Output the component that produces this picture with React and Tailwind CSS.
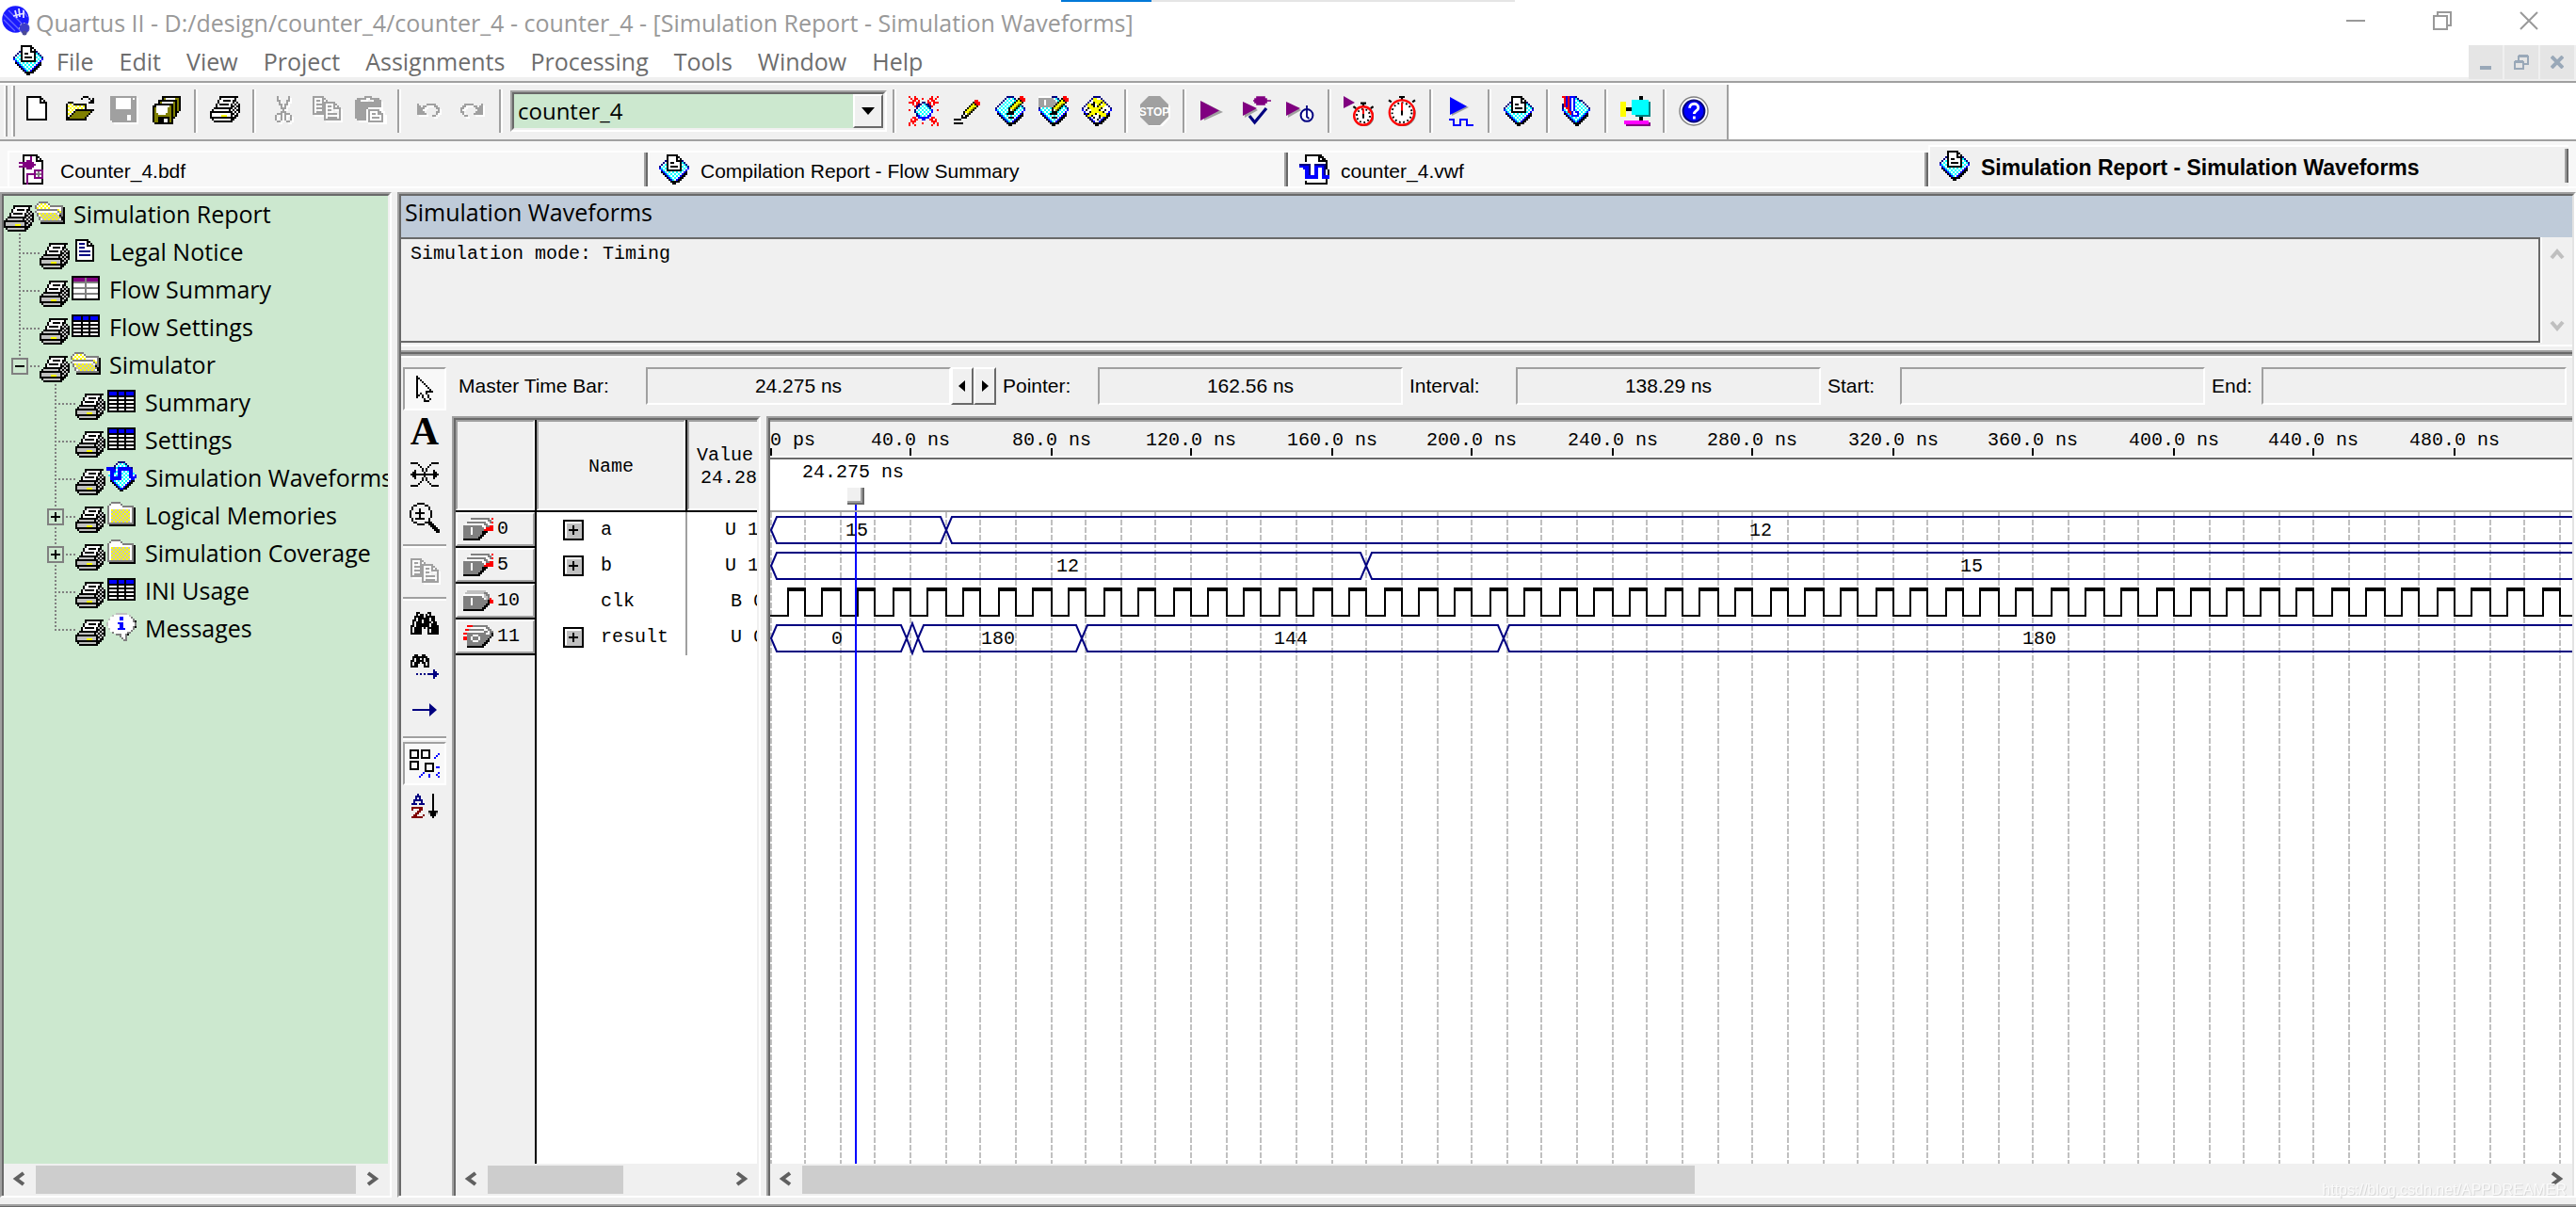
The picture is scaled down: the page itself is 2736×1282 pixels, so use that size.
/**
 * Quartus II: Simulation Report window
 *
 * - Title bar, menu bar, toolbar and document tabs on top
 * - Report tree on the left
 * - Waveform viewer on the right (tools, time bars, signal table, waves)
 *
 * Small icons are kept as text bitmaps, one letter per pixel.
 */

const PALETTE = {
  K: '#000000',
  W: '#ffffff',
  G: '#c0c0c0',
  D: '#808080',
  L: '#a0a0a0',
  Y: '#ffff00',
  O: '#808000',
  N: '#000080',
  B: '#0000ff',
  C: '#00ffff',
  R: '#ff0000',
  P: '#800080',
  M: '#ff00ff',
  T: '#008080',
  V: '#800000',
};

/* dithered fills: [even, odd] */
const DITHER = {
  c: ['#00ffff', '#ffffff'],
  y: ['#ffff00', '#ffffff'],
  g: ['#ffff00', '#c0c0c0'],
};

/* ── Bitmaps ── */
const PRINTER = [
  '.....KKKKKKKKKK.',
  '.....KWWWWWWWK..',
  '....KWWKKKKWKK..',
  '....KWWWWWWWKGK.',
  '...KWKKKKKWKGKGK',
  '...KWWWWWWWKKGKK',
  '..KKKKKKKKKKGKGK',
  '.KGGGGGGGGKGKGKK',
  'KKKKKKKKKKKKGKGK',
  'KGGGGGGGGGGKKGK.',
  'KGGGGGYYYGGKGKK.',
  'KKKKKKKKKKKKKK..',
  '.KGGGGGGGGGKK...',
  '..KKKKKKKKKK....',
];
const PRINTER_LIGHT = PRINTER.map((row) => row.replace(/G/g, 'W'));

const FOLDER_OPEN = [
  '..DDDDD.........',
  '.DWyyyWD........',
  'DWyyyyyWDDDDDDD.',
  'DyyyyyyyWWWWWWDK',
  '.DDDDDDDDDDDyyDK',
  'DWWWWWWWWWWWDyDK',
  '.DggggggggggWDDK',
  '.DWggggggggggKDK',
  '..DggggggggggDKK',
  '..DWgggggggggWKK',
  '...DDDDDDDDDDDDK',
  '...KKKKKKKKKKKKK',
];
const FOLDER = [
  '..DDDDD........',
  '.DWWWWWD.......',
  'DWWWWWWWDDDDDD.',
  'DWWWWWWWWWWWWDK',
  'DWggggggggggWDK',
  'DWggggggggggWDK',
  'DWggggggggggWDK',
  'DWggggggggggWDK',
  'DWggggggggggWDK',
  'DWggggggggggWDK',
  'DWggggggggggWDK',
  'DDDDDDDDDDDDDDK',
  '.KKKKKKKKKKKKKK',
];
const NOTICE = [
  'KKKKKKK....',
  'KWWWWWKK...',
  'KWNNNWKWK..',
  'KWWWWWKKKK.',
  'KWNNNWWWWK.',
  'KWWWWWWWWK.',
  'KWNNNNNNWK.',
  'KWWWWWWWWK.',
  'KWNNNNNNWK.',
  'KWWWWWWWWK.',
  'KWWWWWWWWK.',
  'KKKKKKKKKK.',
];
const TABLE_PURPLE = [
  'KKKKKKKKKKKKKKK',
  'KPPPPPPDPPPPPPK',
  'KPPPPPPDPPPPPPK',
  'KDDDDDDDDDDDDDK',
  'KWWWWWWDWWWWWWK',
  'KWWWWWWDWWWWWWK',
  'KDDDDDDDDDDDDDK',
  'KWWWWWWDWWWWWWK',
  'KWWWWWWDWWWWWWK',
  'KDDDDDDDDDDDDDK',
  'KWWWWWWDWWWWWWK',
  'KWWWWWWDWWWWWWK',
  'KKKKKKKKKKKKKKK',
];
const TABLE_BLUE = [
  'KKKKKKKKKKKKKKK',
  'KBBBBKBBBKBBBBK',
  'KBBBBKBBBKBBBBK',
  'KKKKKKKKKKKKKKK',
  'KWWWWKWWWKWWWWK',
  'KKKKKKKKKKKKKKK',
  'KWWWWKWWWKWWWWK',
  'KKKKKKKKKKKKKKK',
  'KWWWWKWWWKWWWWK',
  'KKKKKKKKKKKKKKK',
  'KWWWWKWWWKWWWWK',
  'KKKKKKKKKKKKKKK',
];
const WAVE_CHIP = [
  '......NNNN......',
  '.....NccccN.....',
  '....NccccccN....',
  'BBBBNcBBBBBBBN..',
  'BBBBBcBBBBBBBB..',
  '..BBBcBBccccBB..',
  '.cBBccBBccccBBc.',
  '.cBBccBBccccBBcB',
  '..BBBBBBccccBBBB',
  '..BBBBBBcccccBB.',
  '..KBccccccccBKK.',
  '...KBccccccBKK..',
  '....KBccccBKK...',
  '.....KBccBKK....',
  '......KBBKK.....',
  '.......KK.......',
];
const MESSAGE = [
  '.....GGGGGG.....',
  '...GWWWWWWWWG...',
  '..WWWWWBBWWWWD..',
  '.GWWWWWBBWWWWWD.',
  '.WWWWWWWWWWWWWDK',
  'GWWWWWBBBWWWWWWD',
  'GWWWWWWBBWWWWWWD',
  '.WWWWWWBBWWWWWDK',
  '.GWWWWBBBBWWWWD.',
  '..WWWWWWWWWWWD..',
  '...DWWWWWWWDD...',
  '.....DDDWWDK....',
  '.......DWWD.....',
  '........DWD.....',
  '.........DD.....',
];
const REPORT = [
  '....KKKKKK......',
  '....KWWWWKK.....',
  '....KWWWWKWK....',
  '...NKWWWWKKKN...',
  '..NcKWKKWWWKcN..',
  '.NccKWWWWWWKccN.',
  'NcccKWKKKKWKcccN',
  'BcccKWWWWWWKcccB',
  '.BccKKKKKKKKccB.',
  '.KBccccccccccBK.',
  '..KBccccccccBKK.',
  '...KBccccccBKK..',
  '....KBccccBKK...',
  '.....KBccBKK....',
  '......KKKKK.....',
  '.......KK.......',
];
const DIAMOND = [
  '......NNNN......',
  '.....NccccN.....',
  '....NccccccN....',
  '...NccccccccN...',
  '..NccccccccccN..',
  '.NccccccccccccN.',
  'NccccccccccccccN',
  'BccccccccccccccB',
  '.BccccccccccccB.',
  '.KBccccccccccBK.',
  '..KBccccccccBKK.',
  '...KBccccccBKK..',
  '....KBccccBKK...',
  '.....KBccBKK....',
  '......KKKKK.....',
  '.......KK.......',
];
const PEN_OVERLAY = [
  '.............RR.',
  '............KRRR',
  '...........KYKRR',
  '..........KYYYK.',
  '.........KYYOK..',
  '........KYYOK...',
  '.......KYYOK....',
  '.......KWOK.....',
  '.......KKK......',
  '......KKKK......',
  '................',
  '.......KKK......',
];
const TAG_OVERLAY = [
  'WWWWWWW.........',
  'LLLLLLLL........',
  'LLLWLLLLL.......',
  'LLLWLLLLLL......',
  'LLLWLLLLL.......',
  'LLLLLLLL........',
];
const CROSS_CHIP = [
  '......NNNN......',
  '.....NYYWWN.....',
  '....NWYYYYYN....',
  '...NWWKYYYKYN...',
  '..NYYKKWYKWYYN..',
  '.NWYYYKWKYYYWWN.',
  'NWWKYYYYYYKWWWWN',
  'BWKWWYYYYKWWKWWB',
  '.BWWKYYYYYYKWWB.',
  '.KBKYYYKWYYYYBK.',
  '..KYYKWWWKYYYKK.',
  '...KBWKWWKWBKK..',
  '....KBWWKWBKK...',
  '.....KBWWBKK....',
  '......KKKKK.....',
  '.......KK.......',
];
const CHIP_LINES = [
  'RRBRBBBN........',
  '.RBRBWBcN.......',
  '.RBRBWBccNN.....',
  '.RBRBWBccccN....',
  'NRBRBWBcccccN...',
  'NRBRBWBccccccN..',
  'NcRRBWBcccccccN.',
  'BccRBWBcccccccB.',
  '.BcRRBWBBccccB..',
  '.KBcRBWWBcccBK..',
  '..KBcBBBBccBKK..',
  '...KBcccccBKK...',
  '....KBcccBKK....',
  '.....KBcBKK.....',
  '......KKKK......',
  '.......KK.......',
];
const BURST = [
  'R..R........R..R',
  '.R.RR..R...RR.R.',
  '..RR.R....R.RR..',
  'RRRWRR.NN.RRWRRR',
  '..R.RNNccNNR.R..',
  '...RNNccccNNR...',
  '....NccccccN....',
  'R..NccccccccB..R',
  '...NccccccccB...',
  '....NccccccB....',
  '....NBccccBB....',
  '..RR.BBBBBB.RR..',
  '.RWRR..BB..RRWR.',
  '.RRR........RRR.',
  'R.R....R.....R.R',
  'R..R........R..R',
];
const PENCIL = [
  '..............',
  '..............',
  '...........RR.',
  '..........KRRR',
  '.........KYKRR',
  '........KYYYK.',
  '.......KYYOK..',
  '......KYYOK...',
  '.....KYYOK....',
  '.....KWOK.....',
  '....KWKK......',
  '....KKK.......',
  'KKKK..........',
  '..............',
  'KKKKK.........',
];
const NEW_DOC = [
  'KKKKKKKK...',
  'KWWWWWWKK..',
  'KWWWWWWKWK.',
  'KWWWWWWKKKK',
  'KWWWWWWWWWK',
  'KWWWWWWWWWK',
  'KWWWWWWWWWK',
  'KWWWWWWWWWK',
  'KWWWWWWWWWK',
  'KWWWWWWWWWK',
  'KWWWWWWWWWK',
  'KWWWWWWWWWK',
  'KKKKKKKKKKK',
];
const OPEN_DOC = [
  '.........KKK...',
  '........K...K.K',
  '.............KK',
  '.KKK........KKK',
  'KyyyKKKKKKK....',
  'KyyyyyyyyyK....',
  'KyyyyyyyyyK....',
  'KyyyyKKKKKKKKKK',
  'KyyyKOOOOOOOOK.',
  'KyyKOOOOOOOOK..',
  'KyKOOOOOOOOK...',
  'KKOOOOOOOOK....',
  'KKKKKKKKKKK....',
];
const SAVE = [
  'LLLLLLLLLLLLLL',
  'LLLWWWWWWWWLWL',
  'LLLWWWWWWWWLLL',
  'LLLWWWWWWWWLLL',
  'LLLWWWWWWWWLLL',
  'LLLWWWWWWWWLLL',
  'LLLWWWWWWWWLLL',
  'LLLLLLLLLLLLLL',
  'LLLLLLLLLLLLLL',
  'LLLLLLLLLLLLLL',
  'LLLLLLLLLWWLLL',
  'LLLLLLLLLWWLLL',
  'LLLLLLLLLWWLLL',
  '.LLLLLLLLLLLLL',
];
const SAVE_ALL = [
  '.....KKKKKKKKKK',
  '.....KOWWWWWOOK',
  '...KKKKKKKKKKOK',
  '...KOWWWWWWOKOK',
  '.KKKKKKKKKKOKOK',
  'KKWWWWWWWOKOKOK',
  'KOWWWWWWOOKOKOK',
  'KOWWWWWWOOKOKOK',
  'KOWWWWWWOOKOKK.',
  'KOOWWWWOOOKOK..',
  'KOOOOOOOOOKOK..',
  'KOOKKKKKKOKK...',
  'KOOKKKWWKOK....',
  'KOOKKKWWKOK....',
  '.KKKKKKKKKK....',
];
const CUT = [
  '.L.....L.',
  '.L.....L.',
  '.LL...LL.',
  '..L...L..',
  '..LL.LL..',
  '...L.L...',
  '...LLL...',
  '....L....',
  '...LLL...',
  '.LLL.LLL.',
  'L..L.L..L',
  'L..L.L..L',
  'L..L.L..L',
  '.LL...LL.',
];
const COPY = [
  'LLLLLL.........',
  'L....LL........',
  'L.LL.L.L.......',
  'L....LLLLLLL...',
  'L.LLLLL....LL..',
  'L....LL.LL.L.L.',
  'L.LLLLL....LLLL',
  'L....LL.LL....L',
  'L.LLLLL.......L',
  'LLLLLLL.LLLLL.L',
  '......L.......L',
  '......L.LLLLL.L',
  '......LLLLLLLLL',
];
const PASTE = [
  '.....LLLL.......',
  '.LLLLL..LLLLL...',
  'LLL.......LLLL..',
  'LLLLLLLLLLLLLL..',
  'LLLLLLLLLLLLLL..',
  'LLLLLLLLLLLLLL..',
  'LLLLLLLWWWWWWW..',
  'LLLLLLWLLLLLLWW.',
  'LLLLLLWLWWWWLLW.',
  'LLLLLLWLWLLWLLLW',
  'LLLLLLWLWWWWWWLW',
  'LLLLLLWLWLLLLWLW',
  '.LLLLLWLWWWWWWLW',
  '......WLLLLLLLLW',
];
const UNDO = [
  '............',
  '............',
  '............',
  '............',
  'L....LLLLL..',
  'LL.LL....LL.',
  'LLLL......LL',
  'LLL........L',
  'LLLL......LL',
  'LLLLL.....L.',
  '........LL..',
];
const REDO = UNDO.map((row) => row.split('').reverse().join(''));

const BDF_FILE = [
  '..KKKKKKKK....',
  '..KWWWPWWKK...',
  '..KWWWPWWKWK..',
  '..KWPPPWWKKKK.',
  'PPPPPPPPWWWWK.',
  '..PPPPPPPWWWK.',
  'PPPPPPPPWWWWK.',
  '..KWPPPWWWWWK.',
  '..KWWWWWPPPPP.',
  '..KWWWWWPWDWP.',
  '..KWPPPPPDDDP.',
  '..KWPWWWPWDWP.',
  '..KWPWWWPPPPP.',
  '..KWPWWWWWWWK.',
  '..KWPWWWWWWWK.',
  '..KKPKKKKKKKK.',
];
const VWF_FILE = [
  '...KKKKKKKKK....',
  '...KWWWWWWKKK...',
  '...KWWWWWWKWKK..',
  '...KWWWWWWKKKKK.',
  '....WWWWWWWWWWK.',
  'NNNNNNWWNNNNNNK.',
  'BBBBBNWWBBBBBNK.',
  '..BBBNWWBBWWBNK.',
  '...BBNWWBBWWBNWK',
  '...BBNWWBBWWBNWK',
  '...BBNWWBBWWBNWK',
  '...BBBBBBBWWBBBB',
  '...BBBBBBBWWBBBB',
  '....WWWWWWWWWWK.',
  '...KWWWWWWWWWWK.',
  '...KKKKKKKKKKKK.',
];
const PIN_BUS = [
  '....DDDDDDDDDD.R',
  '...WWWWWWWWWWDD.',
  '..DDDDDDDDDDWWDR',
  '.WWWWWWWWWWDDWW.',
  'DDDDDDDDDDWWDDRR',
  'DDDDWDDDDDDWRRRR',
  'DDDDWDDDDDDRRRRR',
  'DDDDWDDDDDKKK...',
  'DDDDWDDDDDKK....',
  'DDDDDDDDDKK.....',
  'DDDDDDDDKK......',
  'KKKKKKKKK.......',
];
const PIN_SINGLE = [
  '..GGGGGGGGGG....',
  '.GGGGGGGGGGDD...',
  'WWWWWWWWWWWGDD..',
  'DDDDDDDDDDWGGD..',
  'DDDDWDDDDDDWGDR.',
  'DDDDWDDDDDDDDKRR',
  'DDDDWDDDDDDDDKRR',
  'DDDDWDDDDDDDKK..',
  'DDDDDDDDDDDKK...',
  'DDDDDDDDDDKK....',
  'KKKKKKKKKKK.....',
];
const PIN_OUT = [
  '..RRRDDDDDDDD...',
  '....WWWWWWWWDD..',
  '.RRDDDDDDDDWWDD.',
  '...WWWWWWWWDDWDD',
  'RRDDDDDDDDDDWWDK',
  '..DDDWWWDDDDDDDK',
  'RRDDWDDDWDDDDDK.',
  'RRDDWDDDWDDDDK..',
  '..DDDWWWDDDDKK..',
  '..DDDDDDDDDKK...',
  '..DDDDDDDDKK....',
  '..KKKKKKKKK.....',
];
const BINOCULARS = [
  '...KK....KK....',
  '...K.KK.K.K....',
  '..KKKKK.KKKKK..',
  '..K.KKKKKK.KK..',
  '.KK.KK.KKK.KK..',
  '.K.KKKWKKKK.KK.',
  '.K.KKKKKKK.KKK.',
  'KK.KKKKKKK.KKKK',
  'K.KKKK.K.KKKKKK',
  'K.KKKK...K.KKKK',
  'K.KKKK...K.KKKK',
  'KKKKKK...KKKKKK',
];
const FIND_NEXT = [
  '..KK..KK.......',
  '.KKKKKKKK......',
  '.K.KK.K.KK.....',
  'KK.KKKK.KK.....',
  'K.KKK.KK.K.....',
  'K.KK...K.K.....',
  'KKKK...KKK.....',
  '...............',
  '............N..',
  '............NN.',
  '...N.N.N.NNNNNN',
  '............NN.',
  '............N..',
];
const TRANSITION = [
  'KKKK.......KKKK',
  '....K.....K....',
  '.....K...K.....',
  '......K.K......',
  '..K...K.K...K..',
  '.KK....K....KK.',
  'KKKKKKKKKKKKKKK',
  '.KK....K....KK.',
  '..K...K.K...K..',
  '......K.K......',
  '.....K...K.....',
  '....K.....K....',
  'KKKK.......KKKK',
];
const MAGNIFIER = [
  '....KKKK........',
  '..KK....KK......',
  '.K........K.....',
  '.K...K....K.....',
  'K....K.....K....',
  'K..KKKKK...K....',
  'K....K.....K....',
  'K....K.....K....',
  '.K.KKKKK..K.....',
  '.K........K.....',
  '..KK....KKKK....',
  '....KKKK..KKK...',
  '...........KKK..',
  '............KKK.',
  '.............KKK',
  '..............KK',
];
const SORT = [
  '...N.......K..',
  '..NNN......K..',
  '..N.N......K..',
  '.NNNNN.....K..',
  '.N...N.....K..',
  'NNN.NNN....K..',
  '...........K..',
  'VVVVVV.....K..',
  'V...VV.....K..',
  '...VV....KKKKK',
  '..VV.....LKKKL',
  '.VV...V...KKK.',
  'VVVVVV.....K..',
];
const SNAP = [
  'KKKKK.KKKKK.....',
  'K...K.K...K.....',
  'K...K.K...K....B',
  'K...K.K...K...B.',
  'KKKKK.KKKKK..B..',
  '................',
  'KKKKK...........',
  'K...K...KKKKK...',
  'K...K...K...K...',
  'K...K...K...K.BB',
  'KKKKK...K...K...',
  '........KKKKK...',
  '.......B.......B',
  '......B...B...B.',
  '.....B....B....B',
];
const CURSOR = [
  'K........',
  'KK.......',
  'KWK......',
  'KWWK.....',
  'KWWWK....',
  'KWWWWK...',
  'KWWWWWK..',
  'KWWWWWWK.',
  'KWWWWKKKK',
  'KWKWWK...',
  'KK.KWWK..',
  'K..KWWK..',
  '....KWWK.',
  '....KKK..',
];

/* Draws one or more stacked bitmaps at two screen pixels per dot */
function Pixels({ layers, className = '' }) {
  const cols = layers[0][0].length;
  const rows = layers[0].length;
  const rects = [];

  layers.forEach((art, l) => {
    art.forEach((row, y) => {
      let x = 0;
      while (x < row.length) {
        const ch = row[x];
        let run = 1;
        if (DITHER[ch]) {
          rects.push(<rect key={`${l}-${y}-${x}`} x={x} y={y} width="1" height="1" fill={DITHER[ch][(x + y) % 2]} />);
        } else if (PALETTE[ch]) {
          while (row[x + run] === ch) run += 1;
          rects.push(<rect key={`${l}-${y}-${x}`} x={x} y={y} width={run} height="1" fill={PALETTE[ch]} />);
        }
        x += run;
      }
    });
  });

  return (
    <svg
      width={cols * 2}
      height={rows * 2}
      viewBox={`0 0 ${cols} ${rows}`}
      shapeRendering="crispEdges"
      className={`block shrink-0 ${className}`}
      aria-hidden="true"
    >
      {rects}
    </svg>
  );
}

/* 16x16 vector icon, same cell as the bitmaps */
function Icon16({ children }) {
  return (
    <svg viewBox="0 0 16 16" className="block h-8 w-8 shrink-0" aria-hidden="true">
      {children}
    </svg>
  );
}

function Stopwatch({ cx, cy, r }) {
  return (
    <g>
      <path d={`M${cx - 1.5} ${cy - r - 1.4}h3M${cx} ${cy - r - 1.4}v2M${cx - r} ${cy - r + 0.4}l1.4 1M${cx + r} ${cy - r + 0.4}l-1.4 1`} stroke="#000" strokeWidth="1.1" />
      <circle cx={cx + 0.4} cy={cy + 0.4} r={r} fill="#808080" />
      <circle cx={cx} cy={cy} r={r - 0.4} fill="#fff" stroke="#f00" strokeWidth="1.2" />
      <circle cx={cx} cy={cy} r={r - 1.8} fill="none" stroke="#000" strokeWidth="1" strokeDasharray="0.9 1.3" />
      <path d={`M${cx} ${cy + 1}V${cy - r + 1.6}`} stroke="#f00" strokeWidth="1" />
      <path d={`M${cx} ${cy - 1}v2.4`} stroke="#000" strokeWidth="1" />
    </g>
  );
}

const bitmap = (...layers) => <Pixels layers={layers} />;
const disabled = (art) => <Pixels layers={[art]} className="drop-shadow-[2px_2px_0_#fff]" />;

const FILE_TOOLS = [
  [
    ['New', bitmap(NEW_DOC)],
    ['Open', bitmap(OPEN_DOC)],
    ['Save', disabled(SAVE)],
    ['Save All', bitmap(SAVE_ALL)],
  ],
  [['Print', bitmap(PRINTER_LIGHT)]],
  [
    ['Cut', disabled(CUT)],
    ['Copy', disabled(COPY)],
    ['Paste', disabled(PASTE)],
  ],
  [
    ['Undo', disabled(UNDO)],
    ['Redo', disabled(REDO)],
  ],
];

const RUN_TOOLS = [
  [
    ['Settings', bitmap(BURST)],
    ['Assignment Editor', bitmap(PENCIL)],
    ['Assign Pins', bitmap(DIAMOND, PEN_OVERLAY)],
    ['Pin Planner', bitmap(DIAMOND, TAG_OVERLAY, PEN_OVERLAY)],
    ['Floorplan', bitmap(CROSS_CHIP)],
  ],
  [
    [
      'Stop',
      <Icon16 key="stop">
        <path d="M5.5 1h6L16 5.500v6L11.500 16.500h-6L1 12z" fill="#fff" />
        <path d="M4.500 0h6L15 4.500v6.500L10.500 15.500h-6L0 11V4.500z" fill="#a0a0a0" />
        <text x="7.500" y="10.300" textAnchor="middle" fill="#fff" className="font-['Liberation_Sans'] text-[6px] font-bold">
          STOP
        </text>
      </Icon16>,
    ],
  ],
  [
    [
      'Start Compilation',
      <Icon16 key="play">
        <path d="M2 3l11 5.500L3 13z" fill="#a0a0a0" />
        <path d="M1 2.500v10.500L11 7.700z" fill="#800080" />
      </Icon16>,
    ],
    [
      'Analysis & Synthesis',
      <Icon16 key="check">
        <path d="M1.500 3.500v8l7-4z" fill="#a0a0a0" />
        <path d="M0.500 3v7.500L8 6.500z" fill="#800080" />
        <path d="M6 2.500h9.500M8 0.500h4v4h-4zM7 1.500h6v2H7z" fill="#800080" stroke="#800080" strokeWidth="0.800" />
        <path d="M4 10.500l2.800 3.500L13 6.500" fill="none" stroke="#000080" strokeWidth="1.600" />
      </Icon16>,
    ],
    [
      'Timing Analyzer',
      <Icon16 key="timing">
        <path d="M1.500 3.500v8l7-4z" fill="#a0a0a0" />
        <path d="M0.500 3v7.500L8 6.500z" fill="#800080" />
        <circle cx="11.500" cy="10.200" r="3.200" fill="#fff" stroke="#000080" strokeWidth="1" />
        <path d="M11.500 5v6l1.200 1" fill="none" stroke="#000080" strokeWidth="0.900" />
      </Icon16>,
    ],
  ],
  [
    [
      'Start Timing Simulation',
      <Icon16 key="startwatch">
        <path d="M0 0v6.500L6 3.500z" fill="#800080" />
        <Stopwatch cx={10.5} cy={10.5} r={5.3} />
      </Icon16>,
    ],
    [
      'Timing Closure',
      <Icon16 key="watch">
        <Stopwatch cx={8} cy={8.8} r={7} />
      </Icon16>,
    ],
  ],
  [
    [
      'Start Simulation',
      <Icon16 key="sim">
        <path d="M3.500 1.500v9l9-4.500z" fill="#a0a0a0" />
        <path d="M2.500 0.500v9.500L11.500 5.500z" fill="#00f" />
        <path d="M2 12.500h2.500v3H8v-3h3.500v3H15" fill="none" stroke="#00f" strokeWidth="1" shapeRendering="crispEdges" />
      </Icon16>,
    ],
  ],
  [['Compilation Report', bitmap(REPORT)]],
  [['Chip Editor', bitmap(CHIP_LINES)]],
  [
    [
      'Programmer',
      <Icon16 key="prog">
        <g shapeRendering="crispEdges">
          <path d="M0 3h3v8H0z" fill="#ff0" />
          <path d="M3 6h3v2H3zM10 0h2v14h-2z" fill="#000" />
          <path d="M7 3h9v8H8z" fill="#008080" />
          <path d="M6 2h9v8H6z" fill="#0ff" />
          <path d="M3 14h13v2H3z" fill="#800080" />
          <path d="M2 13h13v2H2z" fill="#f0f" />
        </g>
      </Icon16>,
    ],
  ],
  [
    [
      'Help',
      <Icon16 key="help">
        <circle cx="8" cy="8" r="7.500" fill="#fff" stroke="#808080" strokeWidth="0.700" />
        <circle cx="8" cy="8" r="5.700" fill="#00f" stroke="#000080" strokeWidth="1" />
        <path d="M5.800 6.400c0-3 4.600-3 4.600-.2 0 1.700-2.200 1.600-2.200 3.300M8.200 10.800v1.500" fill="none" stroke="#fff" strokeWidth="1.400" />
      </Icon16>,
    ],
  ],
];

const MENUS = ['File', 'Edit', 'View', 'Project', 'Assignments', 'Processing', 'Tools', 'Window', 'Help'];

const TABS = [
  { label: 'Counter_4.bdf', art: BDF_FILE },
  { label: 'Compilation Report - Flow Summary', art: REPORT },
  { label: 'counter_4.vwf', art: VWF_FILE },
  { label: 'Simulation Report - Simulation Waveforms', art: REPORT, active: true },
];

const TREE = [
  { label: 'Simulation Report', level: 0, art: FOLDER_OPEN },
  { label: 'Legal Notice', level: 1, art: NOTICE },
  { label: 'Flow Summary', level: 1, art: TABLE_PURPLE },
  { label: 'Flow Settings', level: 1, art: TABLE_BLUE },
  { label: 'Simulator', level: 1, art: FOLDER_OPEN, box: 'minus', last: true },
  { label: 'Summary', level: 2, art: TABLE_BLUE },
  { label: 'Settings', level: 2, art: TABLE_BLUE },
  { label: 'Simulation Waveforms', level: 2, art: WAVE_CHIP },
  { label: 'Logical Memories', level: 2, art: FOLDER, box: 'plus' },
  { label: 'Simulation Coverage', level: 2, art: FOLDER, box: 'plus' },
  { label: 'INI Usage', level: 2, art: TABLE_BLUE },
  { label: 'Messages', level: 2, art: MESSAGE, last: true },
];

const SIGNALS = [
  { id: '0', name: 'a', value: 'U 15', art: PIN_BUS, bus: true },
  { id: '5', name: 'b', value: 'U 12', art: PIN_BUS, bus: true },
  { id: '10', name: 'clk', value: 'B 0', art: PIN_SINGLE },
  { id: '11', name: 'result', value: 'U 0', art: PIN_OUT, bus: true },
];

/* ── Toolbar ── */
function ToolGroup({ tools }) {
  return (
    <div className="flex">
      {tools.map(([label, icon]) => (
        <button key={label} type="button" aria-label={label} className="flex h-8 w-[46px] items-start justify-center">
          {icon}
        </button>
      ))}
    </div>
  );
}

function ToolSeparator() {
  return <div className="mx-[6px] h-[46px] w-1 shrink-0 border-l-2 border-r-2 border-l-[#a0a0a0] border-r-white" />;
}

function Toolbar() {
  return (
    <div className="flex border-t-2 border-t-white bg-white">
      <div className="flex h-[58px] items-center border-r-2 border-[#a0a0a0] bg-[#f0f0f0] pb-[2px] pl-1 pr-3">
        <div className="h-[54px] w-1 border-l-2 border-r-2 border-l-white border-r-[#a0a0a0]" />
        <div className="ml-1 h-[54px] w-1 border-l-2 border-r-2 border-l-white border-r-[#a0a0a0]" />
        {FILE_TOOLS.map((tools, i) => (
          <div key={i} className="flex items-center">
            <ToolGroup tools={tools} />
            <ToolSeparator />
          </div>
        ))}
        <div className="relative ml-[2px] h-11 w-[400px] border-2 border-b-white border-l-[#a0a0a0] border-r-white border-t-[#a0a0a0]">
          <select
            aria-label="Current project"
            className="h-full w-full appearance-none rounded-none border-2 border-b-[#f0f0f0] border-l-[#696969] border-r-[#f0f0f0] border-t-[#696969] bg-[#cce8cf] pl-1 font-['Open_Sans',sans-serif] text-[24px] leading-8 text-black"
          >
            <option>counter_4</option>
          </select>
          <span className="pointer-events-none absolute inset-y-[2px] right-[2px] flex w-8 items-center justify-center border-2 border-b-[#696969] border-l-white border-r-[#696969] border-t-white bg-[#f0f0f0]">
            <svg viewBox="0 0 14 8" className="h-2 w-[14px]" aria-hidden="true">
              <path d="M0 0h14L7 8z" />
            </svg>
          </span>
        </div>
        <ToolSeparator />
        {RUN_TOOLS.map((tools, i) => (
          <div key={i} className="flex items-center">
            {i > 0 && <ToolSeparator />}
            <ToolGroup tools={tools} />
          </div>
        ))}
      </div>
    </div>
  );
}

/* ── Title and menu ── */
function TitleBar() {
  return (
    <header className="bg-white">
      <div className="flex h-[2px]">
        <div className="w-[1127px]" />
        <div className="w-24 bg-[#0078d7]" />
        <div className="w-[386px] bg-[#e5e5e5]" />
      </div>
      <div className="flex h-[46px] items-start pt-1 text-[#999999]">
        <svg viewBox="0 0 32 32" className="ml-[2px] h-8 w-8" aria-hidden="true">
          <circle cx="14.500" cy="14.500" r="14.200" fill="#1a1aff" />
          <path d="M2 9l18 18M2 15l12 12M7 5l20 20M22 4l5 8" stroke="#8a8aff" strokeWidth="1.200" opacity="0.7" />
          <path d="M14 5l2 8M18 3l1 9M23 5v8M12 11l12-3" stroke="#e6e6ff" strokeWidth="1.800" />
          <circle cx="24" cy="24" r="5.500" fill="#3c3cc8" stroke="#c8c8dc" strokeWidth="1" strokeDasharray="2 2" />
          <circle cx="24" cy="29" r="2.500" fill="#4a4a96" />
        </svg>
        <h1 className="ml-1 flex-1 whitespace-nowrap font-['Open_Sans',sans-serif] text-[25px] leading-9">
          Quartus II - D:/design/counter_4/counter_4 - counter_4 - [Simulation Report - Simulation Waveforms]
        </h1>
        <div className="flex pr-1">
          <button type="button" aria-label="Minimize" className="flex h-8 w-[92px] items-center justify-center">
            <span className="h-[2px] w-5 bg-[#999999]" />
          </button>
          <button type="button" aria-label="Restore" className="flex h-8 w-[92px] items-center justify-center">
            <svg viewBox="0 0 20 20" className="h-5 w-5" fill="none" stroke="#999999" strokeWidth="2" aria-hidden="true">
              <path d="M1 5h14v14H1zM5 5V1h14v14h-4" />
            </svg>
          </button>
          <button type="button" aria-label="Close" className="flex h-8 w-[92px] items-center justify-center">
            <svg viewBox="0 0 20 20" className="h-5 w-5" fill="none" stroke="#999999" strokeWidth="2" aria-hidden="true">
              <path d="M1 1l18 18M19 1L1 19" />
            </svg>
          </button>
        </div>
      </div>
    </header>
  );
}

function MenuBar() {
  return (
    <nav className="flex h-10 items-start border-b-2 border-[#a0a0a0] bg-white">
      <div className="flex h-[38px] flex-1 items-start border-b-4 border-[#f0f0f0]">
        <div className="ml-[14px] mr-[14px]">
          <Pixels layers={[REPORT]} />
        </div>
        <div className="flex gap-[27px]">
          {MENUS.map((m) => (
            <button key={m} type="button" className="font-['Open_Sans',sans-serif] text-[25px] leading-[34px] text-[#6d6d6d]">
              {m}
            </button>
          ))}
        </div>
      </div>
      <div className="flex h-[38px] gap-[2px] bg-[#f0f0f0] pb-[2px] pr-[2px]">
        <button type="button" aria-label="Minimize document" className="flex h-9 w-9 items-end justify-center bg-[#e5e5e5] pb-[10px]">
          <span className="h-1 w-3 bg-[#99a8b8]" />
        </button>
        <button type="button" aria-label="Restore document" className="flex h-9 w-9 items-center justify-center bg-[#e5e5e5]">
          <svg viewBox="0 0 16 16" className="h-4 w-4" fill="none" stroke="#99a8b8" strokeWidth="2" aria-hidden="true">
            <path d="M1 8h9v7H1zM5 6V2h10v8h-4M1 7h9M5 1h10" />
          </svg>
        </button>
        <button type="button" aria-label="Close document" className="flex h-9 w-9 items-center justify-center bg-[#e5e5e5]">
          <svg viewBox="0 0 14 14" className="h-[14px] w-[14px]" stroke="#99a8b8" strokeWidth="4" aria-hidden="true">
            <path d="M1 1l12 12M13 1L1 13" />
          </svg>
        </button>
      </div>
    </nav>
  );
}

function TabStrip() {
  return (
    <div className="border-t-2 border-[#a0a0a0] bg-[#f7f7f7] pb-1">
      <div className="flex h-[50px] items-end border-b-2 border-white pl-2 pr-2">
        {TABS.map((tab) => (
          <button
            key={tab.label}
            type="button"
            className={[
              'flex flex-1 items-center border-l-2 border-t-2 border-l-white border-t-white pl-[10px] text-black',
              'font-["Liberation_Sans",sans-serif] leading-7',
              tab.active ? 'h-11 bg-[#f0f0f0] pb-[2px] text-[23px] font-bold' : 'h-[38px] bg-[#f7f7f7] text-[21px]',
            ].join(' ')}
          >
            <span className="w-8">
              <Pixels layers={[tab.art]} />
            </span>
            <span className="flex-1 whitespace-nowrap pl-3 pt-[3px] text-left">{tab.label}</span>
            <span className="h-9 w-1 border-l-2 border-r-2 border-l-[#a0a0a0] border-r-[#696969]" />
          </button>
        ))}
      </div>
    </div>
  );
}

/* ── Scroll bars ── */
function Chevron({ dir }) {
  const paths = {
    left: 'M12 2L4 8l8 6',
    right: 'M4 2l8 6-8 6',
    up: 'M2 12l6-7 6 7',
    down: 'M2 4l6 7 6-7',
  };
  const dim = dir === 'up' || dir === 'down';
  return (
    <svg viewBox="0 0 16 16" className="h-4 w-4" fill="none" stroke={dim ? '#bfbfbf' : '#606060'} strokeWidth="4" aria-hidden="true">
      <path d={paths[dir]} />
    </svg>
  );
}

function HScroll({ thumb }) {
  return (
    <div className="flex h-[34px] shrink-0 bg-[#f0f0f0] pb-[2px]">
      <button type="button" aria-label="Scroll left" className="flex w-[34px] items-center justify-center">
        <Chevron dir="left" />
      </button>
      <div className="flex-1 pt-[2px]">
        <div className={`h-[30px] bg-[#cdcdcd] ${thumb}`} />
      </div>
      <button type="button" aria-label="Scroll right" className="flex w-[34px] items-center justify-center">
        <Chevron dir="right" />
      </button>
    </div>
  );
}

/* ── Report tree ── */
function Branch({ box, last }) {
  return (
    <svg viewBox="0 0 38 40" className="block h-10 w-[38px] shrink-0" shapeRendering="crispEdges" fill="none" aria-hidden="true">
      <g stroke="#808080" strokeWidth="2" strokeDasharray="2 2">
        <path d={last ? 'M17 0v22' : 'M17 0v40'} />
        <path d="M20 21h18" />
      </g>
      {box && (
        <g>
          <path d="M9 13h16v16H9z" fill="#cce8cf" stroke="#808080" strokeWidth="2" />
          <path d={box === 'plus' ? 'M12 21h10M17 16v10' : 'M12 21h10'} stroke="#000" strokeWidth="2" />
        </g>
      )}
    </svg>
  );
}

function ReportTree() {
  return (
    <aside className="flex w-[416px] shrink-0 flex-col border-2 border-b-white border-l-[#a0a0a0] border-r-white border-t-[#a0a0a0]">
      <div className="flex flex-1 flex-col border-l-2 border-r-2 border-t-2 border-l-[#696969] border-r-[#f0f0f0] border-t-[#696969]">
        <ul className="flex-1 overflow-hidden bg-[#cce8cf]">
          {TREE.map((node) => (
            <li key={node.label}>
              <button type="button" className="flex h-10 w-full items-start">
                {node.level === 2 && <span className="w-[38px] shrink-0" />}
                {node.level > 0 && <Branch box={node.box} last={node.last} />}
                <Pixels layers={[PRINTER]} className="mt-[10px]" />
                <span className="flex h-9 w-[34px] shrink-0 items-center justify-center">
                  <Pixels layers={[node.art]} />
                </span>
                <span className="whitespace-nowrap pl-2 font-['Open_Sans',sans-serif] text-[25px] leading-[38px] text-black">{node.label}</span>
              </button>
            </li>
          ))}
        </ul>
        <HScroll thumb="w-full" />
      </div>
    </aside>
  );
}

/* ── Waveform viewer ── */
const VIEW_TOOLS = [
  { label: 'Selection', art: CURSOR, pressed: true },
  { label: 'Text' },
  { label: 'Waveform Editing', art: TRANSITION },
  { label: 'Zoom', art: MAGNIFIER },
  null,
  { label: 'Copy Cells', art: COPY, off: true },
  null,
  { label: 'Find', art: BINOCULARS },
  { label: 'Find Next', art: FIND_NEXT },
  { label: 'Go To', arrow: true },
  null,
  { label: 'Snap to Grid', art: SNAP, pressed: true },
  { label: 'Sort', art: SORT },
];

function ViewTools() {
  return (
    <div className="flex w-[54px] shrink-0 flex-col pl-[2px] pt-[10px]">
      {VIEW_TOOLS.map((tool, i) =>
        tool ? (
          <button
            key={tool.label}
            type="button"
            aria-label={tool.label}
            className={[
              'flex h-[46px] w-[46px] items-center justify-center',
              tool.pressed ? 'border-2 border-b-white border-l-[#a0a0a0] border-r-white border-t-[#a0a0a0] bg-[#f8f8f8]' : 'pb-[2px]',
            ].join(' ')}
          >
            {tool.art && <Pixels layers={[tool.art]} className={tool.off ? 'drop-shadow-[2px_2px_0_#fff]' : ''} />}
            {tool.arrow && (
              <svg viewBox="0 0 26 14" className="h-[14px] w-[26px]" aria-hidden="true">
                <path d="M0 6h18V0l8 7-8 7V8H0z" fill="#000080" />
              </svg>
            )}
            {tool.label === 'Text' && <span className="font-['Liberation_Serif',serif] text-[42px] font-bold leading-10 text-black">A</span>}
          </button>
        ) : (
          <div key={i} className="h-[10px] w-[46px] pt-1">
            <div className="h-1 border-b-2 border-t-2 border-b-white border-t-[#a0a0a0]" />
          </div>
        ),
      )}
    </div>
  );
}

function TimeField({ id, label, labelWidth, value, spinner = false }) {
  return (
    <>
      <label htmlFor={id} className={`shrink-0 whitespace-nowrap pl-[7px] ${labelWidth}`}>
        {label}
      </label>
      <input
        id={id}
        readOnly
        defaultValue={value}
        className="h-10 min-w-0 flex-1 border-2 border-b-white border-l-[#a0a0a0] border-r-white border-t-[#a0a0a0] bg-[#f0f0f0] text-center"
      />
      {spinner && (
        <div className="flex">
          {['M10 0v12L3 6z', 'M4 0v12l7-6z'].map((d, i) => (
            <button
              key={d}
              type="button"
              aria-label={i ? 'Next transition' : 'Previous transition'}
              className="flex h-10 w-6 items-center justify-center border-2 border-b-[#696969] border-l-white border-r-[#696969] border-t-white"
            >
              <svg viewBox="0 0 14 12" className="h-3 w-[14px]" aria-hidden="true">
                <path d={d} />
              </svg>
            </button>
          ))}
        </div>
      )}
    </>
  );
}

function TimeBars() {
  return (
    <div className="flex h-[62px] items-start pr-[6px] pt-[10px] font-['Liberation_Sans',sans-serif] text-[21px] leading-10 text-black">
      <TimeField id="master" label="Master Time Bar:" labelWidth="w-[206px]" value="24.275 ns" spinner />
      <TimeField id="pointer" label="Pointer:" labelWidth="w-[108px]" value="162.56 ns" />
      <TimeField id="interval" label="Interval:" labelWidth="w-[120px]" value="138.29 ns" />
      <TimeField id="start" label="Start:" labelWidth="w-[84px]" value="" />
      <TimeField id="end" label="End:" labelWidth="w-[60px]" value="" />
    </div>
  );
}

function SignalTable() {
  const head = 'h-[98px] border-b-2 border-black p-0 font-normal';
  const face = 'flex h-full flex-col justify-center border-2 border-b-white border-l-[#a0a0a0] border-r-white border-t-[#a0a0a0] bg-[#f0f0f0] pt-1';
  return (
    <div className="flex w-[328px] shrink-0 flex-col border-2 border-b-0 border-l-[#a0a0a0] border-r-white border-t-[#a0a0a0]">
      <div className="flex flex-1 flex-col border-l-2 border-r-2 border-t-2 border-l-[#696969] border-r-[#f0f0f0] border-t-[#696969]">
        <div className="flex flex-1 flex-col overflow-hidden bg-white font-['Liberation_Mono',monospace] text-[20px] leading-6 text-black">
          <table className="w-[374px] table-fixed border-separate border-spacing-0">
            <colgroup>
              <col className="w-[86px]" />
              <col className="w-[160px]" />
              <col className="w-[128px]" />
            </colgroup>
            <thead>
              <tr>
                <th className={`${head} border-r-2`} aria-label="Index">
                  <div className={face} />
                </th>
                <th className={`${head} border-r-2`}>
                  <div className={`${face} items-center`}>Name</div>
                </th>
                <th className={head}>
                  <div className={`${face} items-start pl-2`}>
                    <span>Value</span>
                    <span className="pl-1">24.28</span>
                  </div>
                </th>
              </tr>
            </thead>
            <tbody>
              {SIGNALS.map((s) => (
                <tr key={s.id}>
                  <td className="h-[38px] border-b-2 border-r-2 border-black p-0">
                    <div className="flex h-9 items-center gap-1 border-2 border-b-[#a0a0a0] border-l-white border-r-[#a0a0a0] border-t-white bg-[#f0f0f0] pl-[6px]">
                      <Pixels layers={[s.art]} />
                      {s.id}
                    </div>
                  </td>
                  <td className="border-r-2 border-[#a0a0a0] p-0">
                    <div className="flex items-center">
                      <span className="flex w-[68px] justify-end pr-[18px]">
                        {s.bus && (
                          <svg viewBox="0 0 22 22" className="block h-[22px] w-[22px] shrink-0" shapeRendering="crispEdges" aria-hidden="true">
                            <path d="M1 1h20v20H1z" fill="#c0c0c0" stroke="#000" strokeWidth="2" />
                            <path d="M3 19V3h16" fill="none" stroke="#fff" strokeWidth="2" />
                            <path d="M6 11h10M11 6v10" stroke="#000" strokeWidth="2" />
                          </svg>
                        )}
                      </span>
                      {s.name}
                    </div>
                  </td>
                  <td className="p-0 text-center">{s.value}</td>
                </tr>
              ))}
            </tbody>
          </table>
          <div className="w-[86px] flex-1 border-r-2 border-black bg-[#f0f0f0]" />
        </div>
        <HScroll thumb="w-[144px]" />
      </div>
    </div>
  );
}

/* time (ns) to x, snapped to the two pixel raster; values are line centres */
const NS = 3.727;
const toX = (t) => Math.floor((t * NS) / 2) * 2 + 1;
const range = (n) => Array.from({ length: n }, (_, i) => i);

const LANES = [
  { top: 5, changes: [50], labels: [[92, '15'], [1052, '12']] },
  { top: 43, changes: [170], labels: [[316, '12'], [1276, '15']] },
  { top: 120, changes: [39, 42, 89, 209], labels: [[71, '0'], [242, '180'], [553, '144'], [1348, '180']] },
];

function busPath(changes, top) {
  const bottom = top + 28;
  const mid = top + 14;
  const far = 2200;
  let d = '';
  let left = 1;
  [...changes.map(toX), null].forEach((x) => {
    const right = x ?? far;
    if (right - left < 16) {
      /* too short for a flat top, the slopes meet */
      const peak = (left + right) / 2;
      d += `M${left} ${mid}L${peak} ${top - 2}L${right} ${mid}L${peak} ${bottom + 2}Z`;
    } else {
      d += `M${left} ${mid}L${left + 6} ${top}H${right - 6}L${right} ${mid}L${right - 6} ${bottom}H${left + 6}Z`;
    }
    left = right;
  });
  return d;
}

function clockPath() {
  let low = 'M0 110';
  let high = '';
  range(53).forEach((i) => {
    const up = toX(i * 10 + 5);
    const down = toX(i * 10 + 10);
    low += `H${up}V82H${down}V110`;
    high += `M${up - 1} 82H${down + 1}`;
  });
  return [low, high];
}

function Waves() {
  const [clock, highs] = clockPath();
  return (
    <div className="flex min-w-0 flex-1 flex-col border-l-2 border-t-2 border-[#a0a0a0]">
      <div className="flex flex-1 flex-col border-l-2 border-t-2 border-[#696969] bg-white">
        <svg className="block h-[96px] w-full font-['Liberation_Mono',monospace] text-[20px]" shapeRendering="crispEdges">
          <rect width="100%" height="40" fill="#f0f0f0" />
          <rect width="100%" height="2" fill="#a0a0a0" />
          <rect y="38" width="100%" height="2" fill="#ffffff" />
          <rect y="40" width="100%" height="2" fill="#696969" />
          <text x="0" y="27">0 ps</text>
          {range(12).map((i) => (
            <text key={i} x={toX((i + 1) * 40)} y="27" textAnchor="middle">
              {(i + 1) * 40}.0 ns
            </text>
          ))}
          {range(13).map((i) => (
            <rect key={i} x={toX(i * 40) - 1} y="30" width="2" height="8" />
          ))}
          <text x="34" y="61">24.275 ns</text>
          <path d="M82 72h18v18H82z" fill="#696969" />
          <path d="M82 72h16v16H82z" fill="#a0a0a0" />
          <path d="M82 72h14v14H82z" fill="#f0f0f0" />
          <rect x="90" y="90" width="2" height="6" fill="#0000ff" />
        </svg>
        <div className="flex flex-1 flex-col border-t-2 border-[#a0a0a0]">
          <svg className="block h-0 min-h-[300px] w-full flex-1 font-['Liberation_Mono',monospace] text-[20px]">
            {range(53).map((i) => (
              <line key={i} x1={toX(i * 10)} x2={toX(i * 10)} y1="0" y2="100%" stroke="#c0c0c0" strokeWidth="2" strokeDasharray="6 2" />
            ))}
            {LANES.map((lane) => (
              <g key={lane.top}>
                <path d={busPath(lane.changes, lane.top)} fill="none" stroke="#000080" strokeWidth="2" />
                {lane.labels.map(([x, text]) => (
                  <text key={x} x={x} y={lane.top + 20} textAnchor="middle">
                    {text}
                  </text>
                ))}
              </g>
            ))}
            <path d={clock} fill="none" stroke="#000" strokeWidth="2" />
            <path d={highs} stroke="#000" strokeWidth="4" />
            <line x1="91" x2="91" y1="0" y2="100%" stroke="#0000ff" strokeWidth="2" />
          </svg>
        </div>
        <HScroll thumb="w-[948px]" />
      </div>
    </div>
  );
}

function ReportView() {
  return (
    <main className="flex min-w-0 flex-1 flex-col border-2 border-b-white border-l-[#a0a0a0] border-r-white border-t-[#a0a0a0]">
      <div className="flex flex-1 flex-col border-l-2 border-r-2 border-t-2 border-l-[#696969] border-r-[#e3e3e3] border-t-[#696969] bg-[#f0f0f0]">
        <h2 className="h-11 bg-[#bfcbd9] pl-1 font-['Open_Sans',sans-serif] text-[25px] leading-[34px] text-black">Simulation Waveforms</h2>
        <div className="flex h-28">
          <textarea
            readOnly
            aria-label="Simulation mode"
            defaultValue="Simulation mode: Timing"
            className="block h-full flex-1 resize-none rounded-none border-2 border-l-0 border-[#696969] bg-[#f0f0f0] px-[10px] py-1 font-['Liberation_Mono',monospace] text-[20px] leading-6 text-black outline-none"
          />
          <div className="flex w-[34px] flex-col items-center justify-between border-l-2 border-white py-[10px]">
            <Chevron dir="up" />
            <Chevron dir="down" />
          </div>
        </div>
        <div className="mb-1 mt-[2px] h-[2px] bg-white" />
        <div className="h-2 border-b-2 border-t-2 border-b-white border-t-[#a0a0a0]">
          <div className="h-1 border-b-2 border-t-2 border-b-[#a0a0a0] border-t-[#696969]" />
        </div>
        <div className="flex flex-1">
          <ViewTools />
          <div className="flex min-w-0 flex-1 flex-col">
            <TimeBars />
            <div className="flex flex-1 gap-[6px]">
              <SignalTable />
              <Waves />
            </div>
          </div>
        </div>
      </div>
    </main>
  );
}

export default function App() {
  return (
    <div className="relative flex min-h-screen flex-col bg-[#f0f0f0]">
      <TitleBar />
      <MenuBar />
      <Toolbar />
      <TabStrip />
      <div className="flex flex-1 gap-[6px]">
        <ReportTree />
        <ReportView />
      </div>
      <footer className="h-[10px] border-b border-[#696969] pt-[7px]">
        <div className="h-[2px] bg-[#a0a0a0]" />
      </footer>
      <div className="pointer-events-none absolute bottom-2 right-[10px] font-['Liberation_Sans',sans-serif] text-[16px] leading-5 text-[#fafafa] drop-shadow-[1px_1px_0_#d8d8d8]">
        https://blog.csdn.net/APPDREAMER
      </div>
    </div>
  );
}
